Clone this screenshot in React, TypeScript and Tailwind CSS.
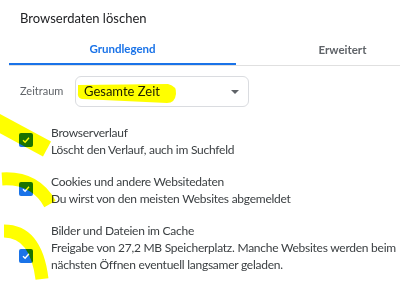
import React from 'react';

const items = [
  {
    title: 'Browserverlauf',
    desc: ['Löscht den Verlauf, auch im Suchfeld'],
    boxTop: 'mt-[9px]',
  },
  {
    title: 'Cookies und andere Websitedaten',
    desc: ['Du wirst von den meisten Websites abgemeldet'],
    boxTop: 'mt-[9px]',
  },
  {
    title: 'Bilder und Dateien im Cache',
    desc: [
      'Freigabe von 27,2 MB Speicherplatz. Manche Websites werden beim',
      'nächsten Öffnen eventuell langsamer geladen.',
    ],
    boxTop: 'mt-[27px]',
  },
];

function Checkbox({ className }: { className?: string }) {
  return (
    <div className={`w-[14px] h-[14px] shrink-0 rounded-[2px] bg-[#1a73e8] flex items-center justify-center ${className ?? ''}`}>
      <svg width="10" height="10" viewBox="0 0 10 10">
        <path d="M2 5.2 L4.1 7.2 L8 2.8" fill="none" stroke="#ffffff" strokeWidth="1.4" />
      </svg>
    </div>
  );
}

// hand-drawn marker strokes on top of the dialog
function Highlights() {
  return (
    <svg className="absolute inset-0 pointer-events-none mix-blend-multiply" width="400" height="282" viewBox="0 0 400 282">
      <path
        d="M78 85 L168 84 Q177 86 176 94 Q175 103 167 103 L82 99 Q77 98 78 92 Z"
        fill="#ffff00"
      />
      <path d="M-5 121 L47 149" stroke="#ffff00" strokeWidth="17" fill="none" />
      <path d="M2 179 Q35 177 50 204" stroke="#ffff00" strokeWidth="13" fill="none" />
      <path d="M4 231 Q36 231 42 279" stroke="#ffff00" strokeWidth="13" fill="none" />
    </svg>
  );
}

export default function App() {
  return (
    <div className="relative w-[400px] h-[282px] overflow-hidden bg-white font-['Lato',sans-serif] text-[#3c4043]">
      <div className="h-[34px] pt-[8px] pl-5 text-[13px] leading-[20px] text-[#202124]">Browserdaten löschen</div>

      <div className="flex ml-[9px] border-b border-[#e0e0e0] w-[500px]">
        <div className="w-[227px] h-[31px] -mb-px flex items-center justify-center border-b-2 border-[#1a73e8] text-[11.5px] font-bold text-[#1a73e8]">
          Grundlegend
        </div>
        <div className="w-[213px] h-[31px] flex items-center justify-center text-[11.5px] font-bold text-[#5f6368]">
          Erweitert
        </div>
      </div>

      <div className="mt-[10px] flex items-center pl-5">
        <div className="w-[55px] text-[11px] text-[#5f6368]">Zeitraum</div>
        <div className="w-[174px] h-[31px] border border-[#dadce0] rounded-md flex items-center justify-between pl-[8px] pr-[9px] text-[13px] text-[#202124]">
          <span>Gesamte Zeit</span>
          <svg width="8" height="4" viewBox="0 0 8 4">
            <path d="M0 0 L8 0 L4 4 Z" fill="#5f6368" />
          </svg>
        </div>
      </div>

      <ul className="mt-[17px] flex flex-col gap-[15px]">
        {items.map((item) => (
          <li key={item.title} className="flex items-start pl-[19px]">
            <Checkbox className={item.boxTop} />
            <div className="ml-[18px] text-[12px] leading-[17px] tracking-[-0.25px] text-[#3c4043] whitespace-nowrap">
              <div>{item.title}</div>
              {item.desc.map((line) => (
                <div key={line}>{line}</div>
              ))}
            </div>
          </li>
        ))}
      </ul>

      <Highlights />
    </div>
  );
}
